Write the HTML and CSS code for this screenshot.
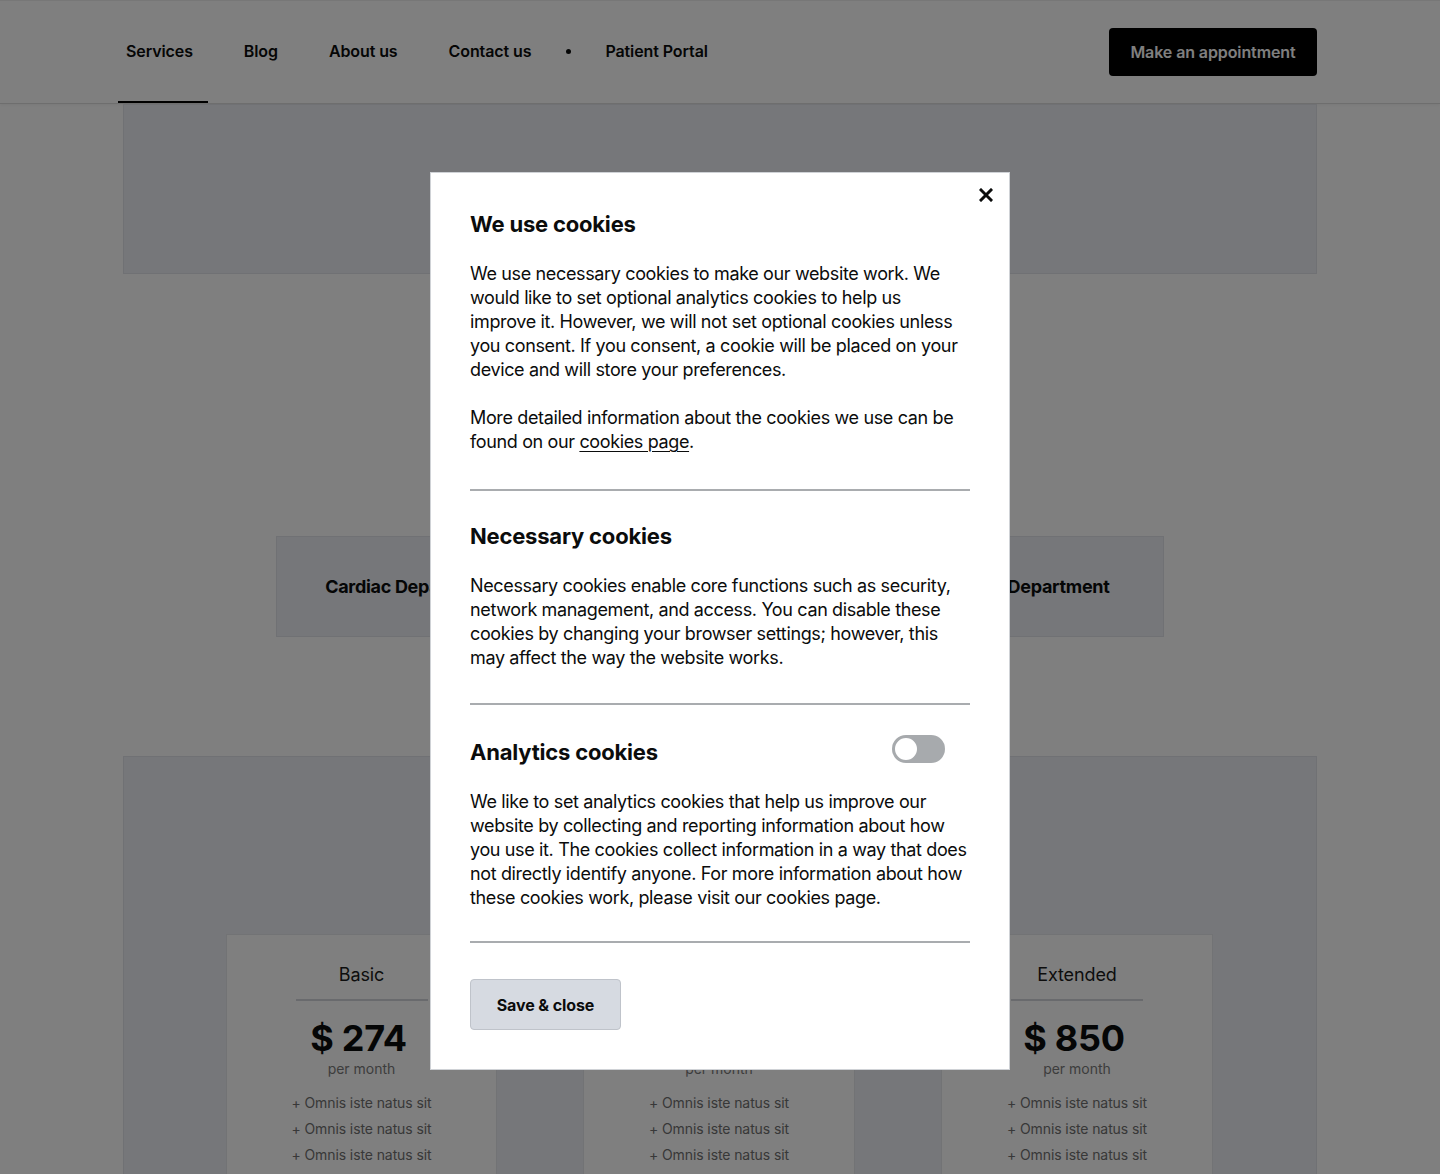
FILE: index.html
```html
<!DOCTYPE html>
<html lang="en">
<head>
<meta charset="utf-8">
<title>Clinic</title>
<link rel="stylesheet" href="styles.css">
</head>
<body>
<header class="site-header">
  <div class="header-inner">
    <nav class="main-nav">
      <a class="nav-link active" href="#">Services</a>
      <a class="nav-link" href="#">Blog</a>
      <a class="nav-link" href="#">About us</a>
      <a class="nav-link" href="#">Contact us</a>
      <span class="nav-dot"></span>
      <a class="nav-link portal" href="#">Patient Portal</a>
    </nav>
    <a class="cta" href="#">Make an appointment</a>
  </div>
</header>

<main>
  <section class="hero-box"></section>

  <section class="departments">
    <div class="dept">Cardiac Department</div>
    <div class="dept">Surgery Department</div>
    <div class="dept">Dental Department</div>
  </section>

  <section class="pricing">
    <div class="cards">
      <div class="card">
        <div class="plan">Basic</div>
        <div class="plan-rule"></div>
        <div class="price">$ 274</div>
        <div class="per">per month</div>
        <ul class="features">
          <li>+ Omnis iste natus sit</li>
          <li>+ Omnis iste natus sit</li>
          <li>+ Omnis iste natus sit</li>
        </ul>
      </div>
      <div class="card">
        <div class="plan">Standard</div>
        <div class="plan-rule"></div>
        <div class="price">$ 520</div>
        <div class="per">per month</div>
        <ul class="features">
          <li>+ Omnis iste natus sit</li>
          <li>+ Omnis iste natus sit</li>
          <li>+ Omnis iste natus sit</li>
        </ul>
      </div>
      <div class="card">
        <div class="plan">Extended</div>
        <div class="plan-rule"></div>
        <div class="price">$ 850</div>
        <div class="per">per month</div>
        <ul class="features">
          <li>+ Omnis iste natus sit</li>
          <li>+ Omnis iste natus sit</li>
          <li>+ Omnis iste natus sit</li>
        </ul>
      </div>
    </div>
  </section>
</main>

<div class="overlay"></div>

<div class="modal" role="dialog" aria-labelledby="cookie-title">
  <button class="close" aria-label="Close">
    <svg width="14" height="14" viewBox="0 0 14 14"><path d="M2 2 L12 12 M12 2 L2 12" stroke="#0b0c0c" stroke-width="3" stroke-linecap="square" fill="none"/></svg>
  </button>
  <div class="sec first">
    <h2 id="cookie-title">We use cookies</h2>
    <p>We use necessary cookies to make our website work. We would like to set optional analytics cookies to help us improve it. However, we will not set optional cookies unless you consent. If you consent, a cookie will be placed on your device and will store your preferences.</p>
    <p>More detailed information about the cookies we use can be found on our <a href="#">cookies page</a>.</p>
  </div>
  <div class="sec second">
    <h2>Necessary cookies</h2>
    <p>Necessary cookies enable core functions such as security, network management, and access. You can disable these cookies by changing your browser settings; however, this may affect the way the website works.</p>
  </div>
  <div class="sec third">
    <div class="sec-head">
      <h2>Analytics cookies</h2>
      <span class="toggle"><span class="knob"></span></span>
    </div>
    <p>We like to set analytics cookies that help us improve our website by collecting and reporting information about how you use it. The cookies collect information in a way that does not directly identify anyone. For more information about how these cookies work, please visit our cookies page.</p>
  </div>
  <div class="actions">
    <button class="save">Save &amp; close</button>
  </div>
</div>
</body>
</html>
```

FILE: styles.css
```css
* { box-sizing: border-box; }

html, body {
  margin: 0;
  padding: 0;
}

body {
  font-family: Inter, "Noto Sans", "Liberation Sans", sans-serif;
  color: #0b0c0c;
  background: #ffffff;
  overflow: hidden;
}

/* Header */
.site-header {
  height: 104px;
  background: #ffffff;
  border-bottom: 1px solid #dcdcdc;
  box-shadow: inset 0 1px 0 #eeeeee, 0 1px 3px rgba(0,0,0,0.06);
}

.header-inner {
  height: 103px;
  margin: 0 123px 0 118px;
  display: flex;
  justify-content: space-between;
  align-items: center;
}

.main-nav {
  display: flex;
  align-items: center;
  height: 100%;
}

.nav-link {
  position: relative;
  display: flex;
  align-items: center;
  height: 100%;
  padding: 0 8px 2px;
  margin-right: 35px;
  font-size: 16px;
  font-weight: 600;
  color: #0b0c0c;
  text-decoration: none;
  letter-spacing: -0.1px;
}

.nav-link.active::after {
  content: "";
  position: absolute;
  left: 0;
  right: -7px;
  bottom: 0;
  height: 2px;
  background: #000000;
}

.nav-dot {
  width: 5px;
  height: 5px;
  border-radius: 50%;
  background: #0b0c0c;
  margin: -1px 26px 0 -8px;
}

.nav-link.portal { margin-right: 0; }

.cta {
  display: flex;
  align-items: center;
  justify-content: center;
  width: 208px;
  height: 48px;
  background: #000000;
  color: #ffffff;
  border-radius: 4px;
  font-size: 16px;
  font-weight: 600;
  text-decoration: none;
  letter-spacing: -0.1px;
}

/* Page content */
.hero-box {
  width: 1194px;
  height: 170px;
  margin: 0 auto;
  background: #eceef5;
  border: 1px solid #e0e2e9;
}

.departments {
  width: 888px;
  margin: 262px auto 0;
  display: grid;
  grid-template-columns: repeat(3, 1fr);
  gap: 39px;
}

.dept {
  height: 101px;
  background: #eceef5;
  border: 1px solid #e0e2e9;
  display: flex;
  align-items: center;
  justify-content: center;
  font-size: 18px;
  font-weight: 700;
  color: #0b0c0c;
  letter-spacing: -0.3px;
}

.pricing {
  width: 1194px;
  height: 600px;
  margin: 119px auto 0;
  background: #eceef5;
  border: 1px solid #e0e2e9;
  padding-top: 177px;
}

.cards {
  display: grid;
  grid-template-columns: 271px 272px 272px;
  column-gap: 86px;
  width: 987px;
  margin-left: 102px;
}

.card {
  background: #ffffff;
  border: 1px solid #e4e6ea;
  padding: 28px 0 20px;
  height: 400px;
  text-align: center;
}

.plan {
  font-size: 18px;
  line-height: 24px;
  color: #1a1a1a;
  letter-spacing: -0.1px;
}

.plan-rule {
  width: 132px;
  height: 2px;
  background: #d2d5da;
  margin: 12px auto 0;
}

.price {
  margin-top: 17px;
  font-size: 36px;
  line-height: 40px;
  font-weight: 700;
  color: #0b0c0c;
  letter-spacing: -0.3px;
  padding-right: 6px;
}

.per {
  font-size: 14px;
  line-height: 20px;
  margin-top: 1px;
  color: #7a7a7a;
}

.features {
  list-style: none;
  margin: 11px 0 0;
  padding: 0;
  font-size: 14px;
  line-height: 26px;
  color: #707070;
  letter-spacing: -0.1px;
}

/* Overlay and modal */
.overlay {
  position: fixed;
  inset: 0;
  background: rgba(0, 0, 0, 0.5);
}

.modal {
  position: fixed;
  top: 172px;
  left: 430px;
  width: 580px;
  background: #ffffff;
  border: 1px solid #cfd2d6;
  padding: 38px 39px 39px 39px;
}

.close {
  position: absolute;
  top: 14px;
  right: 15px;
  width: 16px;
  height: 16px;
  padding: 0;
  border: 0;
  background: transparent;
  display: flex;
  align-items: center;
  justify-content: center;
  cursor: pointer;
}

.sec h2 {
  margin: 0;
  font-size: 22px;
  line-height: 26px;
  font-weight: 700;
  letter-spacing: -0.2px;
  color: #0b0c0c;
}

.sec p {
  margin: 24px 0 0;
  font-size: 18px;
  line-height: 24px;
  color: #0b0c0c;
  letter-spacing: -0.36px;
}

.sec p a {
  color: #0b0c0c;
  text-decoration: underline;
  text-underline-offset: 3px;
  text-decoration-thickness: 1px;
}

.sec.first p:first-of-type { margin-top: 25px; }

.sec.first {
  padding-bottom: 35px;
  border-bottom: 2px solid #a9acaf;
}

.sec.second {
  padding: 32px 0 33px;
  border-bottom: 2px solid #a9acaf;
}

.sec.third {
  padding: 34px 0 31px;
  border-bottom: 2px solid #a9acaf;
}

.sec.second p,
.sec.third p { margin-top: 25px; }

.sec-head {
  display: flex;
  justify-content: space-between;
  align-items: flex-start;
}

.toggle {
  position: relative;
  width: 53px;
  height: 28px;
  margin: -4px 25px 0 0;
  border-radius: 14px;
  background: #a7aaad;
}

.knob {
  position: absolute;
  left: 1px;
  top: 1px;
  width: 26px;
  height: 26px;
  border-radius: 50%;
  background: #ffffff;
  border: 2px solid #a7aaad;
}

.actions {
  padding-top: 36px;
}

.save {
  display: block;
  width: 151px;
  height: 51px;
  background: #d6dae1;
  border: 1px solid #bfc3ca;
  border-radius: 4px;
  font-family: Inter, "Noto Sans", "Liberation Sans", sans-serif;
  font-size: 16px;
  font-weight: 700;
  color: #0b0c0c;
  cursor: pointer;
  letter-spacing: -0.1px;
}
```
